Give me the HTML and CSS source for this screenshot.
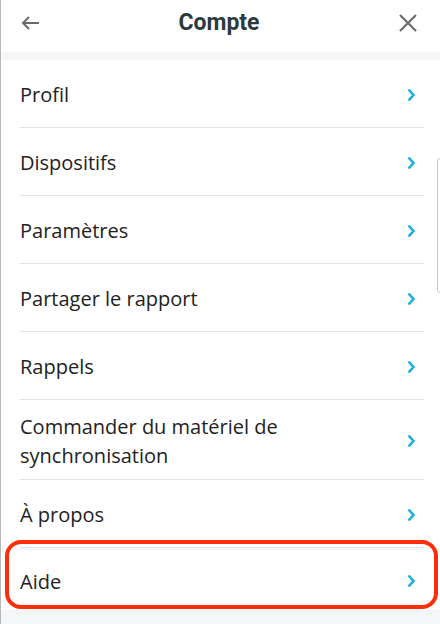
FILE: index.html
```html
<!DOCTYPE html>
<html lang="fr">
<head>
<meta charset="utf-8">
<link rel="stylesheet" href="styles.css">
</head>
<body>
<div class="screen">
  <header class="header">
    <svg class="icon back" width="20" height="16" viewBox="0 0 20 16"><path d="M19 8H3M9 2L3 8l6 6" fill="none" stroke="#6b6b6b" stroke-width="2"/></svg>
    <h1 class="title">Compte</h1>
    <svg class="icon close" width="20" height="20" viewBox="0 0 20 20"><path d="M2 2l16 16M18 2L2 18" fill="none" stroke="#6b6b6b" stroke-width="2.2"/></svg>
  </header>
  <div class="band"></div>
  <ul class="list">
    <li class="row"><span>Profil</span><svg class="chev" width="8" height="14" viewBox="0 0 8 14"><path d="M1.5 1.5L6.5 7l-5 5.5" fill="none" stroke="#1aaee6" stroke-width="2.6"/></svg></li>
    <li class="row"><span>Dispositifs</span><svg class="chev" width="8" height="14" viewBox="0 0 8 14"><path d="M1.5 1.5L6.5 7l-5 5.5" fill="none" stroke="#1aaee6" stroke-width="2.6"/></svg></li>
    <li class="row"><span>Paramètres</span><svg class="chev" width="8" height="14" viewBox="0 0 8 14"><path d="M1.5 1.5L6.5 7l-5 5.5" fill="none" stroke="#1aaee6" stroke-width="2.6"/></svg></li>
    <li class="row"><span>Partager le rapport</span><svg class="chev" width="8" height="14" viewBox="0 0 8 14"><path d="M1.5 1.5L6.5 7l-5 5.5" fill="none" stroke="#1aaee6" stroke-width="2.6"/></svg></li>
    <li class="row"><span>Rappels</span><svg class="chev" width="8" height="14" viewBox="0 0 8 14"><path d="M1.5 1.5L6.5 7l-5 5.5" fill="none" stroke="#1aaee6" stroke-width="2.6"/></svg></li>
    <li class="row tall"><span>Commander du matériel de<br>synchronisation</span><svg class="chev" width="8" height="14" viewBox="0 0 8 14"><path d="M1.5 1.5L6.5 7l-5 5.5" fill="none" stroke="#1aaee6" stroke-width="2.6"/></svg></li>
    <li class="row"><span>À propos</span><svg class="chev" width="8" height="14" viewBox="0 0 8 14"><path d="M1.5 1.5L6.5 7l-5 5.5" fill="none" stroke="#1aaee6" stroke-width="2.6"/></svg></li>
  </ul>
  <ul class="list second">
    <li class="row last"><span>Aide</span><svg class="chev" width="8" height="14" viewBox="0 0 8 14"><path d="M1.5 1.5L6.5 7l-5 5.5" fill="none" stroke="#1aaee6" stroke-width="2.6"/></svg></li>
  </ul>
  <div class="highlight"></div>
  <div class="scrollhint"></div>
</div>
</body>
</html>
```

FILE: styles.css
```css
* { box-sizing: border-box; }
html, body { margin: 0; padding: 0; }
body { background: #f5f6f8; font-family: "Open Sans", "Noto Sans", sans-serif; }
.screen {
  position: relative;
  width: 440px;
  height: 624px;
  overflow: hidden;
  background: #f5f6f8;
  border-left: 1px solid #b8b8b8;
}
.header {
  height: 52px;
  background: #fff;
  display: flex;
  align-items: center;
  justify-content: space-between;
  padding: 0 22px 0 19px;
}
.title {
  margin: 0;
  font-family: Roboto, "Liberation Sans", sans-serif;
  font-weight: 700;
  font-size: 23px;
  color: #2c3a40;
  position: relative;
  top: -4px;
}
.icon.back { margin-top: -6px; }
.icon.close { margin-top: -7px; }
.band { height: 8px; background: #f5f6f8; }
.list {
  list-style: none;
  margin: 0;
  padding: 0 0 0 19px;
  background: #fff;
}
.row {
  display: flex;
  align-items: center;
  justify-content: space-between;
  min-height: 68px;
  padding: 2px 9px 0 0;
  margin-right: 16px;
  border-bottom: 1px solid #e2e2e2;
  font-size: 20px;
  line-height: 29px;
  color: #222;
}
.row.tall { min-height: 80px; }
.list.second { margin-top: 2px; }
.row.last { border-bottom: none; min-height: 60px; }
.chev { flex: none; margin-top: 0; }
.highlight {
  position: absolute;
  left: 4px;
  top: 540px;
  width: 433px;
  height: 69px;
  border: 4px solid #ff2d0a;
  border-radius: 16px;
}
.scrollhint {
  position: absolute;
  right: -4px;
  top: 158px;
  width: 7px;
  height: 135px;
  border: 1px solid #c8c8c8;
  border-radius: 3px;
  background: #fff;
}
```
